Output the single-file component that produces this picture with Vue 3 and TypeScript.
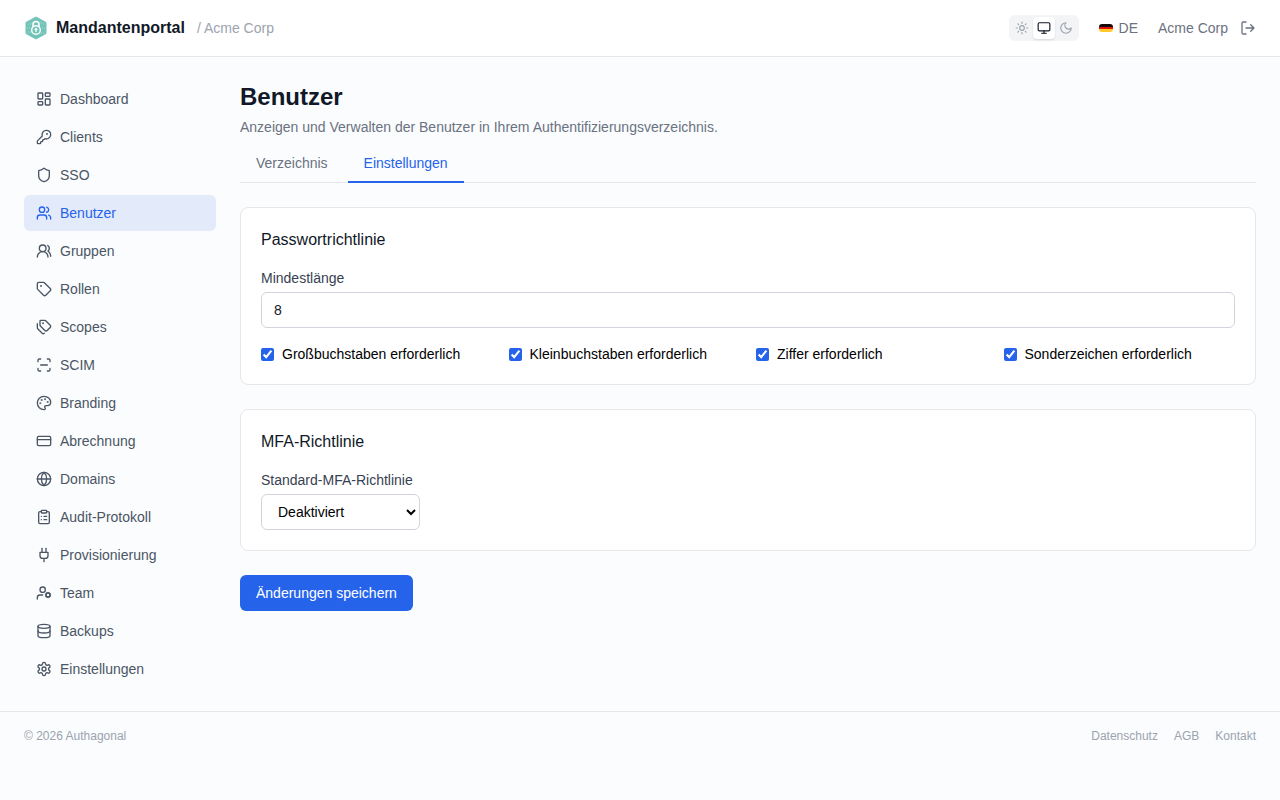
<script setup lang="ts">
import { ref } from 'vue'

interface NavItem {
  label: string
  icon: string
}

const navItems: NavItem[] = [
  { label: 'Dashboard', icon: '<rect width="7" height="9" x="3" y="3" rx="1"/><rect width="7" height="5" x="14" y="3" rx="1"/><rect width="7" height="9" x="14" y="12" rx="1"/><rect width="7" height="5" x="3" y="16" rx="1"/>' },
  { label: 'Clients', icon: '<path d="M2.586 17.414A2 2 0 0 0 2 18.828V21a1 1 0 0 0 1 1h3a1 1 0 0 0 1-1v-1a1 1 0 0 1 1-1h1a1 1 0 0 0 1-1v-1a1 1 0 0 1 1-1h.172a2 2 0 0 0 1.414-.586l.814-.814a6.5 6.5 0 1 0-4-4z"/><circle cx="16.5" cy="7.5" r=".5" fill="currentColor"/>' },
  { label: 'SSO', icon: '<path d="M20 13c0 5-3.5 7.5-7.66 8.95a1 1 0 0 1-.67-.01C7.5 20.5 4 18 4 13V6a1 1 0 0 1 1-1c2 0 4.5-1.2 6.24-2.72a1.17 1.17 0 0 1 1.52 0C14.51 3.81 17 5 19 5a1 1 0 0 1 1 1z"/>' },
  { label: 'Benutzer', icon: '<path d="M16 21v-2a4 4 0 0 0-4-4H6a4 4 0 0 0-4 4v2"/><circle cx="9" cy="7" r="4"/><path d="M22 21v-2a4 4 0 0 0-3-3.87"/><path d="M16 3.13a4 4 0 0 1 0 7.75"/>' },
  { label: 'Gruppen', icon: '<path d="M18 21a8 8 0 0 0-16 0"/><circle cx="10" cy="8" r="5"/><path d="M22 20c0-3.37-2-6.5-4-8a5 5 0 0 0-.45-8.3"/>' },
  { label: 'Rollen', icon: '<path d="M12.586 2.586A2 2 0 0 0 11.172 2H4a2 2 0 0 0-2 2v7.172a2 2 0 0 0 .586 1.414l8.704 8.704a2.426 2.426 0 0 0 3.42 0l6.58-6.58a2.426 2.426 0 0 0 0-3.42z"/><circle cx="7.5" cy="7.5" r=".5" fill="currentColor"/>' },
  { label: 'Scopes', icon: '<path d="M13.172 2a2 2 0 0 1 1.414.586l6.71 6.71a2.4 2.4 0 0 1 0 3.408l-4.592 4.592a2.4 2.4 0 0 1-3.408 0l-6.71-6.71A2 2 0 0 1 6 9.172V3a1 1 0 0 1 1-1z"/><path d="M2 7v6.172a2 2 0 0 0 .586 1.414l6.71 6.71a2.4 2.4 0 0 0 3.191.193"/><circle cx="10.5" cy="6.5" r=".5" fill="currentColor"/>' },
  { label: 'SCIM', icon: '<path d="M3 7V5a2 2 0 0 1 2-2h2"/><path d="M17 3h2a2 2 0 0 1 2 2v2"/><path d="M21 17v2a2 2 0 0 1-2 2h-2"/><path d="M7 21H5a2 2 0 0 1-2-2v-2"/><path d="M7 12h10"/>' },
  { label: 'Branding', icon: '<path d="M12 22a1 1 0 0 1 0-20 10 9 0 0 1 10 9 5 5 0 0 1-5 5h-2.25a1.75 1.75 0 0 0-1.4 2.8l.3.4a1.75 1.75 0 0 1-1.4 2.8z"/><circle cx="13.5" cy="6.5" r=".5" fill="currentColor"/><circle cx="17.5" cy="10.5" r=".5" fill="currentColor"/><circle cx="6.5" cy="12.5" r=".5" fill="currentColor"/><circle cx="8.5" cy="7.5" r=".5" fill="currentColor"/>' },
  { label: 'Abrechnung', icon: '<rect width="20" height="14" x="2" y="5" rx="2"/><path d="M2 10h20"/>' },
  { label: 'Domains', icon: '<circle cx="12" cy="12" r="10"/><path d="M12 2a14.5 14.5 0 0 0 0 20 14.5 14.5 0 0 0 0-20"/><path d="M2 12h20"/>' },
  { label: 'Audit-Protokoll', icon: '<rect width="8" height="4" x="8" y="2" rx="1"/><path d="M16 4h2a2 2 0 0 1 2 2v14a2 2 0 0 1-2 2H6a2 2 0 0 1-2-2V6a2 2 0 0 1 2-2h2"/><path d="M12 11h4"/><path d="M12 16h4"/><path d="M8 11h.01"/><path d="M8 16h.01"/>' },
  { label: 'Provisionierung', icon: '<path d="M12 22v-5"/><path d="M9 8V2"/><path d="M15 8V2"/><path d="M18 8v5a4 4 0 0 1-4 4h-4a4 4 0 0 1-4-4V8Z"/>' },
  { label: 'Team', icon: '<path d="M10 15H6a4 4 0 0 0-4 4v2"/><circle cx="10" cy="7" r="4"/><circle cx="18" cy="15" r="3"/><path d="m21.7 16.4-.9-.3"/><path d="m15.2 13.9-.9-.3"/><path d="m16.6 18.7.3-.9"/><path d="m19.1 12.2.3-.9"/><path d="m19.6 18.7-.4-1"/><path d="m16.8 12.3-.4-1"/><path d="m14.3 16.6 1-.4"/><path d="m20.7 13.8 1-.4"/>' },
  { label: 'Backups', icon: '<ellipse cx="12" cy="5" rx="9" ry="3"/><path d="M3 5v14a9 3 0 0 0 18 0V5"/><path d="M3 12a9 3 0 0 0 18 0"/>' },
  { label: 'Einstellungen', icon: '<path d="M12.22 2h-.44a2 2 0 0 0-2 2v.18a2 2 0 0 1-1 1.73l-.43.25a2 2 0 0 1-2 0l-.15-.08a2 2 0 0 0-2.73.73l-.22.38a2 2 0 0 0 .73 2.73l.15.1a2 2 0 0 1 1 1.72v.51a2 2 0 0 1-1 1.74l-.15.09a2 2 0 0 0-.73 2.73l.22.38a2 2 0 0 0 2.73.73l.15-.08a2 2 0 0 1 2 0l.43.25a2 2 0 0 1 1 1.73V20a2 2 0 0 0 2 2h.44a2 2 0 0 0 2-2v-.18a2 2 0 0 1 1-1.73l.43-.25a2 2 0 0 1 2 0l.15.08a2 2 0 0 0 2.73-.73l.22-.39a2 2 0 0 0-.73-2.73l-.15-.08a2 2 0 0 1-1-1.74v-.5a2 2 0 0 1 1-1.74l.15-.09a2 2 0 0 0 .73-2.73l-.22-.38a2 2 0 0 0-2.73-.73l-.15.08a2 2 0 0 1-2 0l-.43-.25a2 2 0 0 1-1-1.73V4a2 2 0 0 0-2-2z"/><circle cx="12" cy="12" r="3"/>' },
]

const themes = [
  { id: 'light', label: 'Hell', icon: '<circle cx="12" cy="12" r="4"/><path d="M12 2v2"/><path d="M12 20v2"/><path d="m4.93 4.93 1.41 1.41"/><path d="m17.66 17.66 1.41 1.41"/><path d="M2 12h2"/><path d="M20 12h2"/><path d="m6.34 17.66-1.41 1.41"/><path d="m19.07 4.93-1.41 1.41"/>' },
  { id: 'system', label: 'System', icon: '<rect width="20" height="14" x="2" y="3" rx="2"/><path d="M8 21h8"/><path d="M12 17v4"/>' },
  { id: 'dark', label: 'Dunkel', icon: '<path d="M12 3a6 6 0 0 0 9 9 9 9 0 1 1-9-9Z"/>' },
]

const activeTheme = ref('system')
const activeNav = ref('Benutzer')
const activeTab = ref('Einstellungen')
const tabs = ['Verzeichnis', 'Einstellungen']
const minLength = ref(8)
const mfaPolicy = ref('disabled')
const rules = ref([
  { label: 'Großbuchstaben erforderlich', checked: true },
  { label: 'Kleinbuchstaben erforderlich', checked: true },
  { label: 'Ziffer erforderlich', checked: true },
  { label: 'Sonderzeichen erforderlich', checked: true },
])
</script>

<template>
  <div class="portal">
    <header class="topbar">
      <div class="brand">
        <svg class="logo" viewBox="0 0 24 24" aria-hidden="true">
          <path d="M12 1 22 6.500v11L12 23 2 17.500v-11Z" fill="#72c3b8" stroke="#72c3b8" stroke-linejoin="round" />
          <path d="M4 8h3l2-2M4 16h3l2 2M20 8h-2l-2-3M20 17h-3l-2 2M3 12h3M18 12h3" fill="none" stroke="#b5e2dc" stroke-width=".8" stroke-dasharray="1 1" />
          <path d="M9 11V8.500a3 3 0 0 1 6 0V11" fill="none" stroke="#fff" stroke-width="1.500" />
          <circle cx="12" cy="14" r="4.300" fill="#72c3b8" stroke="#fff" stroke-width="1.400" />
          <circle cx="12" cy="13.300" r="1.300" fill="#fff" />
          <path d="M12 13v3" stroke="#fff" stroke-width="1.200" />
        </svg>
        <span class="brand-name">Mandantenportal</span>
        <span class="tenant">/ Acme Corp</span>
      </div>
      <div class="actions">
        <div class="themes" role="group" aria-label="Farbschema">
          <button v-for="t in themes" :key="t.id" type="button" class="theme" :class="{ active: activeTheme === t.id }" :aria-label="t.label" @click="activeTheme = t.id">
            <svg class="icon small" viewBox="0 0 24 24" v-html="t.icon" />
          </button>
        </div>
        <button type="button" class="language">
          <svg class="flag" viewBox="0 0 14 8" aria-hidden="true">
            <clipPath id="flag-shape"><rect width="14" height="8" rx="3" /></clipPath>
            <g clip-path="url(#flag-shape)">
              <path d="M0 0h14v3H0z" fill="#150a08" />
              <path d="M0 3h14v2H0z" fill="#d8160c" />
              <path d="M0 5h14v3H0z" fill="#ffc928" />
            </g>
          </svg>
          DE
        </button>
        <div class="account">
          <span>Acme Corp</span>
          <button type="button" class="logout" aria-label="Abmelden">
            <svg class="icon" viewBox="0 0 24 24"><path d="M9 21H5a2 2 0 0 1-2-2V5a2 2 0 0 1 2-2h4M16 17l5-5-5-5M21 12H9" /></svg>
          </button>
        </div>
      </div>
    </header>

    <div class="body">
      <nav class="sidebar">
        <a v-for="item in navItems" :key="item.label" href="#" class="nav-link" :class="{ active: activeNav === item.label }" @click.prevent="activeNav = item.label">
          <svg class="icon" viewBox="0 0 24 24" aria-hidden="true" v-html="item.icon" />
          {{ item.label }}
        </a>
      </nav>

      <main class="content">
        <h1>Benutzer</h1>
        <p class="subtitle">Anzeigen und Verwalten der Benutzer in Ihrem Authentifizierungsverzeichnis.</p>
        <div class="tabs" role="tablist">
          <button v-for="tab in tabs" :key="tab" type="button" role="tab" class="tab" :class="{ active: activeTab === tab }" :aria-selected="activeTab === tab" @click="activeTab = tab">{{ tab }}</button>
        </div>

        <form class="settings" @submit.prevent>
          <section class="card">
            <h2>Passwortrichtlinie</h2>
            <label class="field-label" for="min-length">Mindestlänge</label>
            <input id="min-length" v-model="minLength" class="text-input" type="number" min="1">
            <div class="rules">
              <label v-for="rule in rules" :key="rule.label" class="rule">
                <input v-model="rule.checked" type="checkbox">
                {{ rule.label }}
              </label>
            </div>
          </section>

          <section class="card">
            <h2>MFA-Richtlinie</h2>
            <label class="field-label" for="mfa-policy">Standard-MFA-Richtlinie</label>
            <select id="mfa-policy" v-model="mfaPolicy" class="select">
              <option value="disabled">Deaktiviert</option>
              <option value="enabled">Aktiviert</option>
              <option value="required">Erforderlich</option>
            </select>
          </section>

          <button type="submit" class="save">Änderungen speichern</button>
        </form>
      </main>
    </div>

    <footer class="footer">
      <span>© 2026 Authagonal</span>
      <div class="footer-links">
        <a href="#">Datenschutz</a>
        <a href="#">AGB</a>
        <a href="#">Kontakt</a>
      </div>
    </footer>
  </div>
</template>

<style>
body {
  background: #fafcfe;
}
</style>

<style scoped>
.portal,
.portal * {
  box-sizing: border-box;
}

.portal {
  min-height: 100vh;
  background: #fafcfe;
  color: #000;
  font: 14px/20px "Liberation Sans", Arial, sans-serif;
}

button,
input,
select {
  margin: 0;
  font: inherit;
}

button {
  padding: 0;
  border: 0;
  background: none;
  color: inherit;
  cursor: pointer;
}

a {
  color: inherit;
  text-decoration: none;
}

.icon {
  width: 16px;
  height: 16px;
  flex: none;
  fill: none;
  stroke: currentColor;
  stroke-width: 2;
  stroke-linecap: round;
  stroke-linejoin: round;
}

.icon.small {
  width: 14px;
  height: 14px;
}

.topbar {
  display: flex;
  align-items: center;
  justify-content: space-between;
  padding: 12px 24px;
  border-bottom: 1px solid #e5e7eb;
  background: #fff;
}

.brand {
  display: flex;
  align-items: center;
  gap: 8px;
  min-height: 32px;
}

.logo {
  width: 24px;
  height: 24px;
}

.brand-name {
  color: #111827;
  font-size: 16px;
  font-weight: 700;
}

.tenant {
  margin-left: 4px;
  color: #9ca3af;
}

.actions {
  display: flex;
  align-items: center;
  gap: 20px;
  color: #6b7280;
}

.themes {
  display: flex;
  padding: 2px;
  border-radius: 6px;
  background: #f3f4f6;
}

.theme {
  display: flex;
  padding: 4px;
  border-radius: 4px;
  color: #9ca3af;
}

.theme.active {
  background: #fff;
  color: #111827;
  box-shadow: 0 1px 2px rgb(0 0 0 / 12%);
}

.language {
  display: flex;
  align-items: center;
  gap: 6px;
}

.flag {
  width: 14px;
  height: 8px;
}

.account {
  display: flex;
  align-items: center;
  gap: 12px;
}

.logout {
  display: flex;
}

.body {
  display: flex;
  gap: 24px;
  padding: 24px;
}

.sidebar {
  display: flex;
  flex: none;
  flex-direction: column;
  gap: 2px;
  width: 192px;
}

.nav-link {
  display: flex;
  align-items: center;
  gap: 8px;
  padding: 8px 12px;
  border-radius: 6px;
  color: #4b5563;
}

.nav-link.active {
  background: #e3eafa;
  color: #2563eb;
}

.content {
  flex: 1;
  min-width: 0;
}

h1 {
  margin: 0;
  color: #111827;
  font-size: 24px;
  font-weight: 700;
  line-height: 32px;
}

.subtitle {
  margin: 4px 0 8px;
  color: #6b7280;
}

.tabs {
  display: flex;
  gap: 4px;
  margin-bottom: 24px;
  box-shadow: inset 0 -1px #e5e7eb;
}

.tab {
  padding: 8px 16px;
  border-bottom: 2px solid transparent;
  color: #6b7280;
}

.tab.active {
  border-color: #2563eb;
  color: #2563eb;
}

.settings {
  display: flex;
  flex-direction: column;
  gap: 24px;
}

.card {
  padding: 20px;
  border: 1px solid #e5e7eb;
  border-radius: 8px;
  background: #fff;
}

h2 {
  margin: 0 0 16px;
  color: #111827;
  font-size: 16px;
  font-weight: 400;
  line-height: 24px;
}

.field-label {
  display: block;
  margin-bottom: 4px;
  color: #374151;
}

.text-input,
.select {
  display: block;
  height: 36px;
  padding: 0 12px;
  border: 1px solid #d1d5db;
  border-radius: 6px;
  background: #fff;
}

.text-input {
  width: 100%;
  color: #111827;
}

.select {
  width: 159px;
  padding-right: 0;
  color: #000;
}

.rules {
  display: grid;
  grid-template-columns: repeat(4, 1fr);
  gap: 16px;
  margin-top: 16px;
}

.rule {
  display: flex;
  align-items: center;
  gap: 8px;
}

.rule input {
  width: 13px;
  height: 13px;
  accent-color: #2563eb;
}

.save {
  align-self: flex-start;
  padding: 8px 16px;
  border-radius: 6px;
  background: #2563eb;
  color: #fff;
}

.footer {
  display: flex;
  justify-content: space-between;
  padding: 16px 24px;
  border-top: 1px solid #e5e7eb;
  color: #9ca3af;
  font-size: 12px;
  line-height: 16px;
}

.footer-links {
  display: flex;
  gap: 16px;
}
</style>
